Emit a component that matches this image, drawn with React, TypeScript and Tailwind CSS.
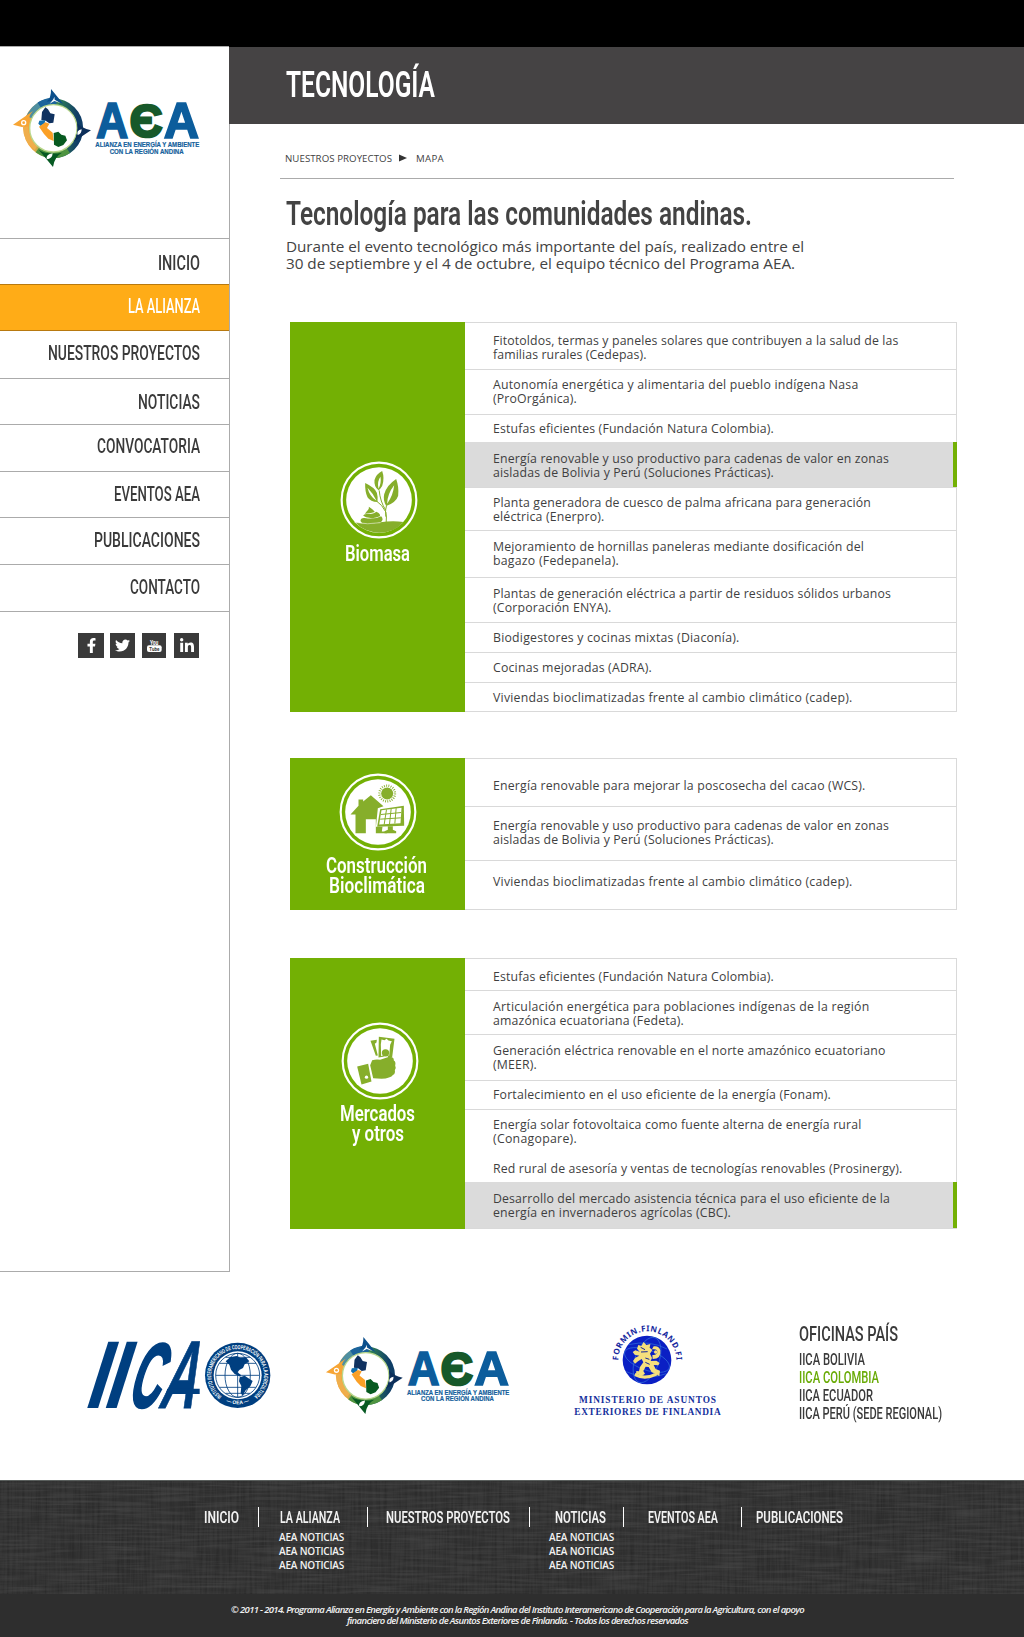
import { useLayoutEffect, useRef, useState } from "react";
import type { ReactNode } from "react";
import { FaFacebookF, FaLinkedinIn, FaTwitter } from "react-icons/fa";

/* One line of text set to an exact measure, by narrowing the glyphs or by tracking. */
function Fit({ w, text, track = false, className = "" }: { w: number; text: string; track?: boolean; className?: string }) {
  const ref = useRef<HTMLSpanElement>(null);
  const [nat, setNat] = useState(0);
  useLayoutEffect(() => {
    if (ref.current && !nat) setNat(ref.current.getBoundingClientRect().width);
  }, [nat]);
  const inner = !nat ? {} : track ? { letterSpacing: `${(w - nat) / text.length}px` } : { transform: `scaleX(${w / nat})` };
  return (
    <span className={`block whitespace-nowrap ${className}`} style={{ width: w }}>
      <span ref={ref} className="inline-block origin-left align-top" style={inner}>
        {text}
      </span>
    </span>
  );
}

function AeaLogo({ className }: { className: string }) {
  return (
    <svg viewBox="36 174 564 240" className={className} aria-label="AEA">
      <defs>
        <linearGradient id="aeaRing" x1="0.1" y1="0.5" x2="0.95" y2="0.5">
          <stop offset="0" stopColor="#f3a73c" />
          <stop offset="0.25" stopColor="#8fae62" />
          <stop offset="0.6" stopColor="#2f7d57" />
          <stop offset="1" stopColor="#0f3d66" />
        </linearGradient>
      </defs>
      <circle cx="160" cy="295" r="80" fill="none" stroke="url(#aeaRing)" strokeWidth="19" />
      <path d="M88 262A80 80 0 0 1 152 214" fill="none" stroke="#4f8fa0" strokeWidth="19" />
      <path d="M118 226A80 80 0 0 1 170 214" fill="none" stroke="#1c649b" strokeWidth="20" />
      <path d="M76 290A84 84 0 0 0 108 354" fill="none" stroke="#efae4c" strokeWidth="15" />
      <path d="M112 360A80 80 0 0 0 205 362" fill="none" stroke="#4f9440" strokeWidth="17" />
      <circle cx="160" cy="295" r="71" fill="#fff" stroke="#b9d78b" strokeWidth="4" />
      <path d="M153 177L190 222Q168 209 140 215Q154 204 153 177Z" fill="#0b4f8c" />
      <path d="M163 200L164 209L181 219L163 213L149 221L160 208Z" fill="#fff" />
      <path d="M39 284L99 243Q83 258 86 288L66 291Z" fill="#f7a534" />
      <circle cx="71" cy="278" r="8" fill="#fff" />
      <circle cx="71" cy="278" r="4" fill="#f7a534" />
      <path d="M273 301L220 336Q237 309 231 278Q243 294 273 301Z" fill="#0c2f5a" />
      <path d="M245 298Q228 302 233 315Q245 312 245 298Z" fill="#fff" />
      <path d="M159 411L116 359Q142 376 186 368Q163 380 159 411Z" fill="#075a23" />
      <path d="M140 388Q137 373 158 370Q157 387 140 388Z" fill="#fff" />
      <path d="M126 246L136 232L144 238L151 250L164 253L160 278L148 280L137 272L124 270Z" fill="#103260" />
      <path d="M118 272L136 270L134 280L122 288L115 281Z" fill="#1470ae" />
      <path d="M117 290L136 277L148 281L141 294L158 308L161 333L145 326L132 312Z" fill="#fba026" />
      <path d="M161 309L175 305L184 314L196 317L201 331L190 345L175 351L162 344Z" fill="#075a20" />
      <text x="288" y="324" fontFamily="Liberation Sans" fontWeight="700" fontSize="148" textLength="97" lengthAdjust="spacingAndGlyphs" fill="#0c5d9c" stroke="#0c5d9c" strokeWidth="5">A</text>
      <text x="389" y="322" fontFamily="Liberation Sans" fontWeight="700" fontSize="140" textLength="98" lengthAdjust="spacingAndGlyphs" fill="#17592a" stroke="#17592a" strokeWidth="8">Є</text>
      <text x="491" y="324" fontFamily="Liberation Sans" fontWeight="700" fontSize="148" textLength="106" lengthAdjust="spacingAndGlyphs" fill="#0c5d9c" stroke="#0c5d9c" strokeWidth="5">A</text>
      <g fontFamily="Liberation Sans" fontWeight="700" fontSize="22.5" fill="#155f9c" stroke="#155f9c" strokeWidth="0.6">
        <text x="286" y="352" textLength="312" lengthAdjust="spacingAndGlyphs">ALIANZA EN ENERGÍA Y AMBIENTE</text>
        <text x="329" y="373" textLength="222" lengthAdjust="spacingAndGlyphs">CON LA REGIÓN ANDINA</text>
      </g>
    </svg>
  );
}

function IicaLogo() {
  return (
    <svg viewBox="48 60 558 210" className="h-[70px] w-[186px]" aria-label="IICA">
      <g fontFamily="Liberation Sans" fontWeight="700" fontSize="289" fill="#003f80">
        <text transform="translate(37 265) skewX(-17.6) scale(0.78 1)">I</text>
        <text transform="translate(92 265) skewX(-17.6) scale(0.78 1)">I</text>
        <text transform="translate(167 261) skewX(-17.6) scale(0.45 0.94)" stroke="#003f80" strokeWidth="9">C</text>
        <text transform="translate(262 265) skewX(-17.6) scale(0.5 1)" stroke="#003f80" strokeWidth="3">A</text>
      </g>
      <path d="M292 206H389V222H287Z" fill="#003f80" />
      <circle cx="503" cy="166" r="98" fill="#003f80" />
      <circle cx="503" cy="166" r="72" fill="#fff" />
      <g fill="none" stroke="#003f80" strokeWidth="2.5">
        <circle cx="503" cy="166" r="66" />
        <ellipse cx="503" cy="166" rx="38" ry="66" />
        <path d="M503 100V232M437 166H569M448 130H558M448 202H558M466 112H540M466 220H540" />
      </g>
      <path d="M467 124L480 112L500 108L512 114L528 112L538 124L524 133L519 144L509 149L502 157L513 165L511 170L494 162L483 149L478 134Z" fill="#003f80" />
      <path d="M509 172L524 167L548 183L541 199L527 211L518 227L512 219L514 198L507 184Z" fill="#003f80" />
      <defs>
        <path id="iicaTop" d="M455 229A79 79 0 1 1 551 229" />
        <path id="iicaBottom" d="M462 243A91 91 0 0 0 544 243" />
      </defs>
      <g fill="#fff" fontFamily="Liberation Sans" fontWeight="700">
        <text fontSize="18">
          <textPath href="#iicaTop" textLength="392" lengthAdjust="spacingAndGlyphs">INSTITUTO INTERAMERICANO DE COOPERACIÓN PARA LA AGRICULTURA</textPath>
        </text>
        <text fontSize="15">
          <textPath href="#iicaBottom" startOffset="50%" textAnchor="middle">— OEA —</textPath>
        </text>
      </g>
    </svg>
  );
}

function FinlandLogo() {
  return (
    <svg viewBox="70 40 450 285" className="h-[95px] w-[150px]" aria-label="Formin Finland">
      <defs>
        <path id="forminArc" d="M206 152A87 87 0 0 1 380 152" />
      </defs>
      <circle cx="292" cy="151" r="73" fill="#0a1fc4" />
      <g fill="none" stroke="#3f86e0" strokeWidth="2" opacity="0.8">
        <ellipse cx="292" cy="151" rx="36" ry="71" transform="rotate(20 292 151)" />
        <ellipse cx="292" cy="151" rx="71" ry="30" transform="rotate(20 292 151)" />
        <path d="M236 105Q300 90 352 118M230 186Q290 215 350 192" />
      </g>
      <g fill="#f6df7d">
        <path d="M262 117L266 106L275 109L282 97L290 106L302 103L300 114L308 121L301 132L307 145L303 154L320 153L330 160L326 167L312 166L318 178L331 183L329 200L319 192L306 188L297 172L288 171L281 184L286 192L276 199L259 192L260 184L268 185L271 172L281 158L276 148L265 155L256 162L250 154L257 144L269 138L255 135L249 127L257 122L270 126Z" />
        <path d="M257 190Q285 206 322 188L324 197Q286 216 254 199Z" />
        <path d="M309 148Q335 148 332 122Q327 107 312 110L307 119Q324 116 323 128Q320 138 308 136Z" />
        <circle cx="318" cy="127" r="5" />
      </g>
      <path d="M273 113L286 120M274 127L294 126M287 145L299 149M287 158L300 164" stroke="#12249b" strokeWidth="3" />
      <text fontFamily="Noto Sans" fontWeight="700" fontSize="24" fill="#14279e">
        <textPath href="#forminArc" textLength="272">FORMIN.FINLAND.FI</textPath>
      </text>
      <g fontFamily="Liberation Serif" fontWeight="700" fontSize="28" fill="#14309c">
        <text x="88" y="281" textLength="411">MINISTERIO DE ASUNTOS</text>
        <text x="74" y="315" textLength="439">EXTERIORES DE FINLANDIA</text>
      </g>
    </svg>
  );
}

/* White double-ring medallion; the drawing inside keeps its own origin at (cx, cy). */
function Medallion({ cx, cy, children }: { cx: number; cy: number; children: ReactNode }) {
  return (
    <svg viewBox="0 0 234 234" className="block size-[78px]">
      <circle cx="117" cy="117" r="112" fill="none" stroke="#fff" strokeWidth="6.5" />
      <circle cx="117" cy="117" r="98.5" fill="#fff" />
      <g transform={`translate(${117 - cx} ${117 - cy})`} fill="#86ae2b">
        {children}
      </g>
    </svg>
  );
}

const BiomasaIcon = () => (
  <Medallion cx={295.5} cy={570}>
    <path d="M224 637Q262 644 300 637Q335 631 369 636Q342 668 296 668Q250 666 224 637Z" />
    <path d="M305 483Q313 505 305 528Q299 538 294 541Q280 530 282 510Q287 492 305 483ZM300 500Q289 514 294 536Q303 520 300 500Z" fillRule="evenodd" />
    <path d="M254 519Q283 533 289 548Q293 561 291 576Q270 576 261 562Q253 545 254 519ZM261 533Q267 559 288 572Q277 549 261 533Z" fillRule="evenodd" />
    <path d="M347 507Q356 532 353 557Q347 577 317 588Q307 572 311 553Q318 526 347 507ZM341 526Q321 551 320 581Q338 557 341 526Z" fillRule="evenodd" />
    <path d="M296 541Q299 575 316 601M289 574Q304 583 316 606Q319 620 317 638M318 587Q313 600 316 620" fill="none" stroke="#86ae2b" strokeWidth="3" />
    <path d="M259 604Q266 599 265 590Q280 600 283 606Q268 611 253 611Z" />
    <path d="M248 617Q250 611 261 612Q281 612 287 605Q302 611 298 619Q280 628 257 622Z" />
    <path d="M240 633Q240 623 252 624Q283 629 302 619Q311 629 301 637Q270 646 245 640Z" />
    <path d="M222 637Q262 645 300 638" fill="none" stroke="#fff" strokeWidth="1.5" />
  </Medallion>
);

const HouseIcon = () => (
  <Medallion cx={292.5} cy={215.5}>
    <path d="M210 223L234 197V178H248V184L271 165L309 198L292 204L286 262V237H256V279H225V223Z" />
    <path d="M286 260H306L304 274H320V279H286Z" />
    <circle cx="320" cy="160" r="18" />
    <circle cx="320" cy="160" r="23.5" fill="none" stroke="#86ae2b" strokeWidth="7" strokeDasharray="2.6 4.1" />
    <path d="M299 207L370 197L371 257L290 260Z" />
    <path d="M303 210L363 203L360 249L296 253Z" fill="#fff" />
    <path d="M318 208L311 253M332 206L327 252M347 204L343 250M301 223L362 217M299 237L361 233" stroke="#86ae2b" strokeWidth="3" />
    <path d="M322 258H337V269L347 273V279H312V273L322 269Z" />
  </Medallion>
);

const MoneyIcon = () => (
  <Medallion cx={298.5} cy={362.5}>
    <path d="M270 302L289 299L288 307L283 311L292 346L286 347Z" />
    <path d="M295 290L342 296L335 351H324Q319 343 308 350L294 352Z" />
    <path d="M303 298L312 300L318 296L324 301L334 303L329 314L326 347Q317 340 302 348L301 312Z" fill="#fff" />
    <circle cx="315" cy="338" r="11" />
    <path d="M275 360Q289 356 299 359L326 350Q341 350 340 361Q347 365 344 376Q348 384 343 390Q345 400 338 404Q330 415 303 416L278 414L269 375Z" />
    <path d="M230 379L263 371L273 424L243 433Z" />
    <circle cx="258" cy="411" r="5" fill="#fff" />
  </Medallion>
);

type Line = [string, number];
type Row = { h: string; pt: string; lines: Line[]; active?: boolean; plain?: boolean };

function RowView({ row }: { row: Row }) {
  const tone = row.active ? "border-[#dbdbdb] bg-[#dbdbdb]" : row.plain ? "border-transparent" : "border-[#d9d9d9]";
  return (
    <li className={`flex border-t ${tone} ${row.h}`}>
      <div className={`mt-px flex-1 pl-[28px] text-[12.3px] leading-[14px] text-[#3f3f3f] ${row.pt}`}>
        {row.lines.map(([t, w]) => (
          <Fit key={t} text={t} w={w} track />
        ))}
      </div>
      {row.active && <span className="-mt-px -mr-px w-1 bg-[#73b004]" />}
    </li>
  );
}

function Section({ className, side, icon, labelGap, labels, rows }: { className: string; side: string; icon: ReactNode; labelGap: string; labels: Line[]; rows: Row[] }) {
  return (
    <section className={`flex w-[667px] ${className}`}>
      <div className={`flex w-[175px] flex-col items-center bg-[#73b004] ${side}`}>
        {icon}
        <div className={`flex flex-col items-center font-['Roboto'] text-[22px] leading-[20px] font-semibold text-white ${labelGap}`}>
          {labels.map(([t, w]) => (
            <Fit key={t} text={t} w={w} />
          ))}
        </div>
      </div>
      <ul className="flex-1 border-r border-b border-[#d9d9d9]">
        {rows.map((r, i) => (
          <RowView key={i} row={r} />
        ))}
      </ul>
    </section>
  );
}

const energiaRenovable: Line[] = [
  ["Energía renovable y uso productivo para cadenas de valor en zonas", 396],
  ["aisladas de Bolivia y Perú (Soluciones Prácticas).", 281],
];
const viviendas: Line[] = [["Viviendas bioclimatizadas frente al cambio climático (cadep).", 359.5]];
const estufas: Line[] = [["Estufas eficientes (Fundación Natura Colombia).", 281]];

const biomasa: Row[] = [
  { h: "h-[47px]", pt: "pt-[10px]", lines: [["Fitotoldos, termas y paneles solares que contribuyen a la salud de las", 405.5], ["familias rurales (Cedepas).", 153.5]] },
  { h: "h-[45px]", pt: "pt-[7px]", lines: [["Autonomía energética y alimentaria del pueblo indígena Nasa", 365.5], ["(ProOrgánica).", 84]] },
  { h: "h-[28px]", pt: "pt-[6px]", lines: estufas },
  { h: "h-[45px]", pt: "pt-[8px]", lines: energiaRenovable, active: true },
  { h: "h-[43px]", pt: "pt-[7px]", lines: [["Planta generadora de cuesco de palma africana para generación", 378], ["eléctrica (Enerpro).", 111.5]] },
  { h: "h-[47px]", pt: "pt-[8px]", lines: [["Mejoramiento de hornillas paneleras mediante dosificación del", 371], ["bagazo (Fedepanela).", 126]] },
  { h: "h-[45px]", pt: "pt-[8px]", lines: [["Plantas de generación eléctrica a partir de residuos sólidos urbanos", 398], ["(Corporación ENYA).", 118.5]] },
  { h: "h-[30px]", pt: "pt-[7px]", lines: [["Biodigestores y cocinas mixtas (Diaconía).", 246.5]] },
  { h: "h-[30px]", pt: "pt-[7px]", lines: [["Cocinas mejoradas (ADRA).", 159]] },
  { h: "h-[29px]", pt: "pt-[7px]", lines: viviendas },
];

const construccion: Row[] = [
  { h: "h-[48px]", pt: "pt-[19px]", lines: [["Energía renovable para mejorar la poscosecha del cacao (WCS).", 372.5]] },
  { h: "h-[54px]", pt: "pt-[11px]", lines: energiaRenovable },
  { h: "h-[49px]", pt: "pt-[13px]", lines: viviendas },
];

const mercados: Row[] = [
  { h: "h-[32px]", pt: "pt-[10px]", lines: estufas },
  { h: "h-[44px]", pt: "pt-[8px]", lines: [["Articulación energética para poblaciones indígenas de la región", 376.5], ["amazónica ecuatoriana (Fedeta).", 191]] },
  { h: "h-[46px]", pt: "pt-[8px]", lines: [["Generación eléctrica renovable en el norte amazónico ecuatoriano", 392.5], ["(MEER).", 44]] },
  { h: "h-[29px]", pt: "pt-[6px]", lines: [["Fortalecimiento en el uso eficiente de la energía (Fonam).", 338]] },
  { h: "h-[44px]", pt: "pt-[7px]", lines: [["Energía solar fotovoltaica como fuente alterna de energía rural", 368.5], ["(Conagopare).", 84]] },
  { h: "h-[29px]", pt: "pt-[7px]", lines: [["Red rural de asesoría y ventas de tecnologías renovables (Prosinergy).", 409.5]], plain: true },
  { h: "h-[46px]", pt: "pt-[8px]", lines: [["Desarrollo del mercado asistencia técnica para el uso eficiente de la", 397], ["energía en invernaderos agrícolas (CBC).", 238]], active: true },
];

const nav = [
  { t: "INICIO", w: 42, box: "h-[46px] pt-[12px]" },
  { t: "LA ALIANZA", w: 72, box: "h-[46px] pt-[9px]", on: true },
  { t: "NUESTROS PROYECTOS", w: 152, box: "h-[48px] pt-[10px]", after: true },
  { t: "NOTICIAS", w: 62, box: "h-[46px] pt-[11px]" },
  { t: "CONVOCATORIA", w: 103, box: "h-[47px] pt-[9px]" },
  { t: "EVENTOS AEA", w: 86, box: "h-[46px] pt-[10px]" },
  { t: "PUBLICACIONES", w: 106, box: "h-[47px] pt-[10px]" },
  { t: "CONTACTO", w: 70, box: "h-[47px] pt-[10px]" },
];

function Sidebar() {
  return (
    <aside className="flex w-[230px] flex-col border-t border-r border-b border-[#ababab]">
      <div className="h-[191px] pt-[41px] pl-[12px]">
        <AeaLogo className="h-[80px] w-[188px]" />
      </div>
      <nav className="font-['Roboto'] text-[20px] leading-6 font-medium">
        {nav.map((n) => (
          <a
            key={n.t}
            className={`flex justify-end border-t pr-[29.5px] ${n.box} ${n.on ? "border-[#b8790f] bg-[#ffac17] text-white" : n.after ? "border-[#b8790f] text-[#3a3a3a]" : "border-[#ababab] text-[#3a3a3a]"}`}
          >
            <Fit text={n.t} w={n.w} />
          </a>
        ))}
      </nav>
      <div className="flex border-t border-[#ababab] pt-[21px] pl-[78px] text-white">
        <span className="flex h-[25px] w-[26px] items-center justify-center bg-[#3a3a3a]"><FaFacebookF size={15} /></span>
        <span className="ml-[6px] flex size-[25px] items-center justify-center bg-[#3a3a3a]"><FaTwitter size={15} /></span>
        <span className="ml-[7px] flex h-[25px] w-[24px] items-center justify-center bg-[#3a3a3a]">
          <svg viewBox="0 0 72 75" className="h-[25px] w-[24px]" fontFamily="Roboto" fontWeight="700">
            <text x="24" y="35" fontSize="20" textLength="25" lengthAdjust="spacingAndGlyphs" fill="#fff">You</text>
            <rect x="15" y="37" width="44" height="20" rx="6" fill="#fff" />
            <text x="22" y="54" fontSize="18" textLength="30" lengthAdjust="spacingAndGlyphs" fill="#3a3a3a">Tube</text>
          </svg>
        </span>
        <span className="ml-[8px] flex size-[25px] items-center justify-center bg-[#3a3a3a]"><FaLinkedinIn size={16} /></span>
      </div>
    </aside>
  );
}

const Sep = ({ className }: { className: string }) => <span className={`-mt-px h-5 w-px bg-white ${className}`} />;

function FooterItem({ t, w, subs, className }: { t: string; w: number; subs?: boolean; className: string }) {
  return (
    <div className={className}>
      <div className={`flex justify-center ${subs ? "pr-[3px]" : ""}`}>
        <Fit text={t} w={w} className="font-['Roboto'] text-[16.5px] leading-5 font-semibold" />
      </div>
      {subs && (
        <div className="pt-[2px] text-[10px] leading-[14px] font-semibold">
          {[0, 1, 2].map((i) => (
            <Fit key={i} text="AEA NOTICIAS" w={65} track />
          ))}
        </div>
      )}
    </div>
  );
}

function Footer() {
  return (
    <footer className="flex h-[157px] flex-col bg-[#2e2e2e] text-[#f2f2f2]">
      <div className="relative h-[114px] border-t border-[#5a5f5d] bg-[#343434]">
        <svg className="absolute inset-0 size-full opacity-25" aria-hidden="true">
          <filter id="warp" x="0" y="0" width="100%" height="100%">
            <feTurbulence type="fractalNoise" baseFrequency="0.4 0.02" numOctaves="2" seed="4" />
            <feColorMatrix values="0 0 0 0 0  0 0 0 0 0  0 0 0 0 0  1.6 0 0 0 -0.6" />
          </filter>
          <filter id="weft" x="0" y="0" width="100%" height="100%">
            <feTurbulence type="fractalNoise" baseFrequency="0.02 0.4" numOctaves="2" seed="9" />
            <feColorMatrix values="0 0 0 0 0.6  0 0 0 0 0.6  0 0 0 0 0.6  0.8 0 0 0 -0.3" />
          </filter>
          <rect width="100%" height="100%" filter="url(#warp)" />
          <rect width="100%" height="100%" filter="url(#weft)" />
        </svg>
        <div className="relative flex pt-[27px] pl-[204px]">
          <FooterItem t="INICIO" w={35} className="" />
          <Sep className="ml-[19px]" />
          <FooterItem t="LA ALIANZA" w={60} subs className="ml-[20px] w-[65px]" />
          <Sep className="ml-[23px]" />
          <FooterItem t="NUESTROS PROYECTOS" w={124} className="ml-[18px]" />
          <Sep className="ml-[19px]" />
          <FooterItem t="NOTICIAS" w={51} subs className="ml-[19px] w-[65px]" />
          <Sep className="ml-[9px]" />
          <FooterItem t="EVENTOS AEA" w={70} className="ml-[24px]" />
          <Sep className="ml-[23px]" />
          <FooterItem t="PUBLICACIONES" w={87} className="ml-[14px]" />
        </div>
      </div>
      <div className="pt-[10px] pl-[231px] text-[9.5px] leading-[11px] font-semibold italic">
        <Fit
          text="© 2011 - 2014. Programa Alianza en Energía y Ambiente con la Región Andina del Instituto Interamericano de Cooperación para la Agricultura, con el apoyo"
          w={573}
          track
        />
        <Fit text="financiero del Ministerio de Asuntos Exteriores de Finlandia. - Todos los derechos reservados" w={341} track className="ml-[116px]" />
      </div>
    </footer>
  );
}

export default function App() {
  return (
    <div className="flex h-[1637px] w-[1024px] flex-col overflow-hidden bg-white font-['Open_Sans',sans-serif]">
      <div className="h-[46px] bg-black" />
      <div className="flex h-[1226px]">
        <Sidebar />
        <main className="-ml-px flex-1">
          <header className="h-[78px] border-t border-black bg-[#454344] pt-[15px] pl-[57px] font-['Roboto'] text-[37.5px] leading-[44px] font-semibold text-white">
            <Fit text="TECNOLOGÍA" w={149} />
          </header>
          <div className="ml-[51px] flex h-[55px] w-[674px] border-b border-[#ababab] pt-[28px] pl-[5px] text-[9.7px] leading-[14px] text-[#3f3f3f]">
            <Fit text="NUESTROS PROYECTOS" w={107} track />
            <svg viewBox="0 0 8 8" className="mt-[2px] ml-[7px] size-[8px]"><path d="M0 0.5L8 4L0 7.5Z" fill="#333" /></svg>
            <Fit text="MAPA" w={28} track className="ml-[9px]" />
          </div>
          <div className="pt-[13px] pl-[57px] text-[#434343]">
            <h1 className="font-['Roboto'] text-[34px] leading-[42px] font-semibold"><Fit text="Tecnología para las comunidades andinas." w={466} /></h1>
            <div className="pt-[4px] text-[15.3px] leading-[16.5px]">
              <Fit text="Durante el evento tecnológico más importante del país, realizado entre el" w={518} track />
              <Fit text="30 de septiembre y el 4 de octubre, el equipo técnico del Programa AEA." w={509} track />
            </div>
          </div>
          <div className="ml-[61px]">
            <Section className="mt-[51px] h-[390px]" side="pt-[139px] pl-[2px]" icon={<BiomasaIcon />} labelGap="mt-[5px] pr-[2px]" labels={[["Biomasa", 65]]} rows={biomasa} />
            <Section className="mt-[46px] h-[152px]" side="pt-[15px]" icon={<HouseIcon />} labelGap="mt-[5px] pr-[2px]" labels={[["Construcción", 101], ["Bioclimática", 96]]} rows={construccion} />
            <Section className="mt-[48px] h-[271px]" side="pt-[64px] pl-[4px]" icon={<MoneyIcon />} labelGap="mt-[4px] pr-[4px]" labels={[["Mercados", 75], ["y otros", 52]]} rows={mercados} />
          </div>
        </main>
      </div>
      <div className="flex h-[208px] items-start">
        <div className="ml-[86px] pt-[68px]"><IicaLogo /></div>
        <div className="ml-[53px] pt-[64px]"><AeaLogo className="h-[79px] w-[185px]" /></div>
        <div className="ml-[63px] pt-[51px]"><FinlandLogo /></div>
        <div className="ml-[76px] pt-[49px] font-['Roboto'] text-[16.3px] leading-[18px] font-medium text-[#3a3a3a]">
          <Fit text="OFICINAS PAÍS" w={99} className="mb-[4px] text-[21px] leading-[26px]" />
          <Fit text="IICA BOLIVIA" w={66} />
          <Fit text="IICA COLOMBIA" w={80} className="text-[#69ab06]" />
          <Fit text="IICA ECUADOR" w={74} />
          <Fit text="IICA PERÚ (SEDE REGIONAL)" w={143} />
        </div>
      </div>
      <Footer />
    </div>
  );
}
